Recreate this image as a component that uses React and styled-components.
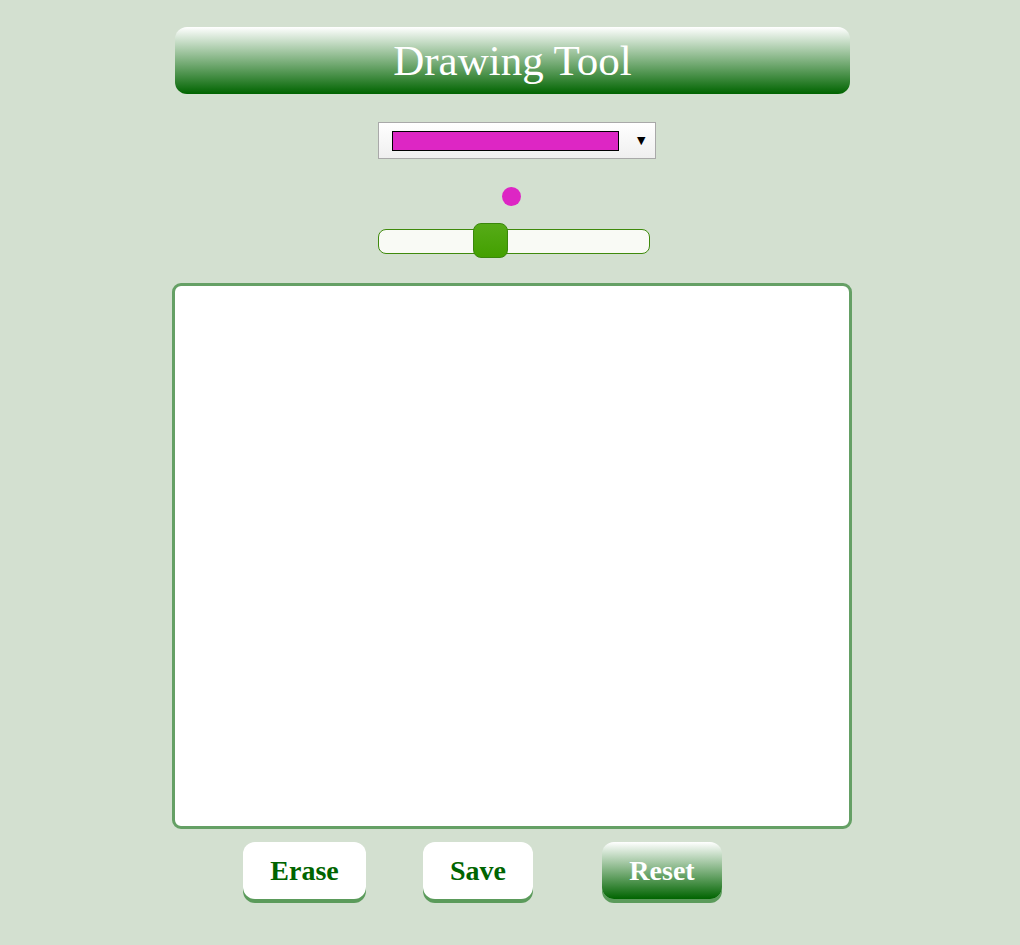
import React from "react";
import styled, { createGlobalStyle } from "styled-components";

const GlobalStyle = createGlobalStyle`
    html, body {
        margin: 0;
        padding: 0;
        background-color: #d3e0d0;
        font-family: "Liberation Serif", "Times New Roman", serif;
    }
`;

const Page = styled.div`
    width: 1020px;
    min-height: 945px;
    padding-top: 27px;
    box-sizing: border-box;
    display: flex;
    flex-direction: column;
`;

const Header = styled.h1`
    margin: 0 0 0 175px;
    width: 675px;
    height: 67px;
    border-radius: 12px;
    background: linear-gradient(to bottom, #ffffff 0%, #006400 100%);
    color: #ffffff;
    font-size: 43px;
    font-weight: 400;
    line-height: 67px;
    text-align: center;
`;

const Controls = styled.div`
    display: flex;
    flex-direction: column;
    align-items: flex-start;
    margin: 28px 0 0 378px;
`;

const Select = styled.div`
    width: 278px;
    height: 37px;
    box-sizing: border-box;
    border: 1px solid #a9a9a9;
    background: linear-gradient(to bottom, #ffffff, #efefef);
    display: flex;
    align-items: center;
    padding: 0 0 0 13px;
`;

const Swatch = styled.div`
    width: 227px;
    height: 20px;
    box-sizing: border-box;
    border: 1px solid #000;
    background: ${(props) => props.color};
`;

const Arrow = styled.span`
    margin-left: 18px;
    font-family: "DejaVu Sans", sans-serif;
    font-size: 11px;
    color: #000;
`;

const Dot = styled.div`
    width: 19px;
    height: 19px;
    border-radius: 50%;
    background: ${(props) => props.color};
    margin: 28px 0 0 124px;
`;

const SliderTrack = styled.div`
    position: relative;
    width: 272px;
    height: 25px;
    box-sizing: border-box;
    margin-top: 23px;
    border: 1px solid #3f8a0c;
    border-radius: 8px;
    background: #f9faf5;
`;

const SliderThumb = styled.div`
    position: absolute;
    top: -7px;
    width: 35px;
    height: 35px;
    box-sizing: border-box;
    border: 1px solid #3a870c;
    border-radius: 8px;
    background: linear-gradient(to bottom, #56ab18, #43a000);
`;

const Canvas = styled.div`
    width: 680px;
    height: 546px;
    box-sizing: border-box;
    margin: 29px 0 0 172px;
    border: 3px solid #65a065;
    border-radius: 9px;
    background: #ffffff;
`;

const Buttons = styled.div`
    display: flex;
    margin: 13px 0 0 243px;
`;

const Button = styled.button`
    height: 57px;
    padding: 0 27px;
    margin-left: ${(props) => props.$gap || 0}px;
    border: none;
    border-radius: 12px;
    box-shadow: 0 4px 0 #5b9b5b;
    background: ${(props) =>
        props.$primary ? "linear-gradient(to bottom, #ffffff 0%, #006400 100%)" : "#ffffff"};
    color: ${(props) => (props.$primary ? "#ffffff" : "#006400")};
    font-family: "Liberation Serif", "Times New Roman", serif;
    font-size: 28px;
    font-weight: 700;
    cursor: pointer;
`;

const App = () => {
    const color = "#dd26c4";
    return (
        <Page>
            <GlobalStyle />
            <Header>Drawing Tool</Header>
            <Controls>
                <Select>
                    <Swatch color={color} />
                    <Arrow>▼</Arrow>
                </Select>
                <Dot color={color} />
                <SliderTrack>
                    <SliderThumb style={{ left: "94px" }} />
                </SliderTrack>
            </Controls>
            <Canvas />
            <Buttons>
                <Button style={{ width: "123px" }}>Erase</Button>
                <Button $gap={57} style={{ width: "110px" }}>Save</Button>
                <Button $gap={69} $primary style={{ width: "120px" }}>Reset</Button>
            </Buttons>
        </Page>
    );
};

export default App;
